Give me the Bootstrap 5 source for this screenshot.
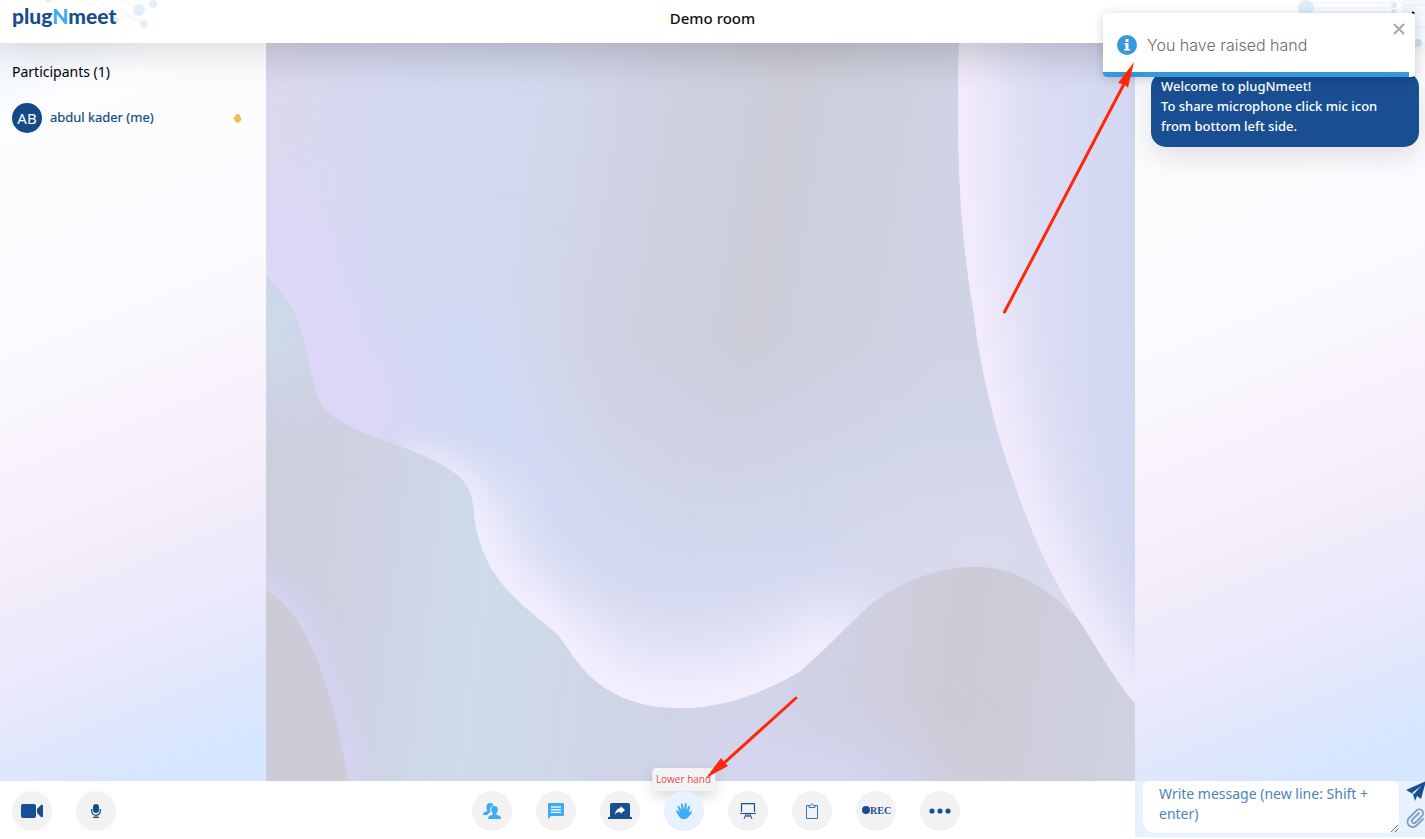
<!DOCTYPE html>
<html lang="en">
<head>
<meta charset="utf-8">
<meta name="viewport" content="width=device-width, initial-scale=1">
<title>plugNmeet - Demo room</title>
<link href="https://cdn.jsdelivr.net/npm/bootstrap@5.3.0/dist/css/bootstrap.min.css" rel="stylesheet">
<style>
  :root { --navy: #194f92; --sky: #3dabf6; }
  body { font-family: "Noto Sans", sans-serif; font-size: 14px; line-height: 20px; color: #111; background: #fff; }
  .app-header { height: 43px; background: #fff; box-shadow: 0 4px 40px rgba(0, 0, 0, .16); z-index: 2; }
  .brand { font-family: Lato, sans-serif; font-weight: 900; font-size: 21px; line-height: 32px; color: var(--navy); }
  .brand:hover { color: var(--navy); }
  .brand span { color: var(--sky); }
  .circuit { top: 0; pointer-events: none; }
  .room-title { font-weight: 500; font-size: 15px; line-height: 36px; }
  .menu-toggle { right: 6px; top: 8px; width: 12px; height: 16px; }
  .side-panel { background: linear-gradient(158deg, #eef5fb 0%, #fcfdff 9%, #fdfbff 32%, #f5eefa 62%, #e9e8fb 78%, #d5e6ff 95%); }
  .people { width: 266px; padding: 19px 24px 0 12px; }
  .chat { width: 290px; padding: 29px 6px 0 16px; }
  .people h1 { font-size: 14px; line-height: 20px; font-weight: 400; margin-bottom: 21px; color: #000; }
  .avatar { width: 30px; height: 30px; background: #164a86; color: #fff; font-size: 15px; }
  .person { color: #164a86; font-size: 13px; line-height: 18px; padding-bottom: 2px; -webkit-text-stroke: .2px; }
  .bubble { background: var(--navy); color: #fff; border-radius: 15px; padding: 4px 10px 11px; font-weight: 500; font-size: 13px; box-shadow: 0 10px 30px rgba(0, 0, 0, .12); }
  .stage svg { width: 100%; height: 100%; }
  .app-footer { height: 58px; padding: 0 0 2px 6px; background: #fff; z-index: 3; }
  .tool { width: 40px; height: 40px; background: #f2f2f2; color: var(--navy); }
  .tool.lit { color: var(--sky); }
  .tool.raised { background: #e8f1ff; }
  .tools { gap: 24px; }
  .tools-start { padding-left: 6px; }
  .tip { bottom: 40px; left: 50%; transform: translateX(-50%); background: #f4f4f6; color: #e8474c; font-family: "Open Sans", sans-serif; font-size: 10px; line-height: 15px; padding: 4px 4px; border-radius: 4px; box-shadow: 0 6px 14px rgba(0, 0, 0, .14); z-index: -1; }
  .tool-wrap { z-index: 1; }
  .composer { width: 290px; background: #e8f1ff; padding-left: 8px; overflow: hidden; }
  .composer textarea { width: 256px; height: 52px; border: 0; border-radius: 6px 6px 12px 12px; padding: 3px 16px; font-size: 14px; line-height: 20px; color: var(--navy); background: #fff; overflow: hidden; }
  .composer textarea::placeholder { color: #4d83b9; opacity: 1; }
  .composer-actions { width: 26px; padding: 0 0 0 7px; }
  .notice { top: 13px; right: 10px; width: 312px; height: 64px; background: #fff; border-radius: 4px; box-shadow: 0 1px 10px rgba(0, 0, 0, .12), 0 2px 15px rgba(0, 0, 0, .06); font-family: Inter, "Liberation Sans", sans-serif; font-weight: 300; font-size: 16px; color: #6c6c6c; padding: 0 14px; z-index: 5; overflow: hidden; }
  .notice-text { margin-left: 10px; }
  .notice-bar { left: 0; bottom: 0; width: 98%; height: 5px; background: #3498db; }
  .notice-close { top: 10px; right: 10px; color: #a8a8a8; }
  .pointers { inset: 0; width: 100%; height: 100%; z-index: 6; pointer-events: none; }
</style>
</head>
<body>
<div class="position-relative d-flex flex-column vh-100 overflow-hidden">
  <header class="app-header position-relative flex-shrink-0 d-flex justify-content-center">
    <svg class="circuit position-absolute start-0" width="180" height="43" fill="#e3f0fc" stroke="#edf6fd" aria-hidden="true">
      <g fill="none"><path d="M82 0l36 16h18M96 0l40 20M108 0l34 23M122 0l16 8"/></g>
      <g stroke="none"><circle cx="139" cy="10" r="6"/><circle cx="153" cy="4" r="4"/><circle cx="144" cy="24" r="4"/><circle cx="116" cy="20" r="3"/><circle cx="48" cy="0" r="3"/></g>
    </svg>
    <svg class="circuit position-absolute end-0" width="145" height="80" fill="#dcecfb" stroke="#e4f0fb" aria-hidden="true">
      <path stroke="none" fill="#f2f8fe" d="M122 0h23v43h-23z"/>
      <path fill="none" d="M26 3h86M26 8h86M34 12h78M118 0l6 5h21M134 27h11"/>
      <g stroke="none"><circle cx="26" cy="8" r="8"/><circle cx="114" cy="5" r="3"/><circle cx="114" cy="12" r="3"/><circle cx="138" cy="43" r="4" fill="#cfdcf0"/></g>
    </svg>
    <a href="#" class="brand position-absolute start-0 top-0 ms-2 ps-1 text-decoration-none">plug<span>N</span>meet</a>
    <div class="room-title">Demo room</div>
    <button class="menu-toggle btn p-0 border-0 position-absolute d-flex" aria-label="Menu"><svg width="12" height="16"><circle cx="6" cy="5" r="1.500"/></svg></button>
  </header>

  <main class="d-flex flex-grow-1" style="min-height:0">
    <aside class="people side-panel flex-shrink-0">
      <h1>Participants (1)</h1>
      <div class="d-flex align-items-center">
        <div class="avatar rounded-circle d-flex align-items-center justify-content-center me-2">AB</div>
        <div class="person flex-grow-1">abdul kader (me)</div>
        <svg width="9" height="10" viewBox="0 0 14 18" fill="#f9bd4f" role="img" aria-label="Hand raised"><path d="M4 16C2 14 0 11 0 8l2-1 1 1V4l2-2 1 1 1-2 2 1 1 1 2 1v4l2 1c0 3-1 6-3 7-2 2-5 2-7 0z"/></svg>
      </div>
    </aside>

    <section class="stage flex-grow-1 overflow-hidden" aria-label="Stage">
      <svg class="d-block" viewBox="0 0 869 738" preserveAspectRatio="none" aria-hidden="true">
        <defs>
          <path id="wave" d="M0 0V232C18 253 26 258 34 284C44 314 46 355 61 368C89 396 158 403 194 434C213 455 204 470 213 496C226 543 259 563 291 591C309 611 327 665 416 665C460 665 500 648 533 629C565 602 585 578 608 559C650 529 704 514 749 531C783 546 801 565 813 577L869 577V0Z"/>
          <path id="blob" d="M693 0C690 110 694 190 707 265C715 335 732 400 760 472C776 516 799 556 813 577C828 601 848 635 869 661V0Z"/>
          <path id="corner" d="M0 547C45 573 68 655 82 738H0Z"/>
          <clipPath id="waveClip"><use href="#wave"/></clipPath>
          <clipPath id="blobClip"><use href="#blob"/></clipPath>
          <linearGradient id="base" x1="0" y1=".5" x2="1" y2=".6"><stop offset="0" stop-color="#cdcedd"/><stop offset=".1" stop-color="#cfd0e0"/><stop offset=".27" stop-color="#cddbea"/><stop offset=".45" stop-color="#cfd4e7"/><stop offset=".6" stop-color="#d2d4ea"/><stop offset=".82" stop-color="#cccbd6"/><stop offset="1" stop-color="#cfd0e0"/></linearGradient>
          <linearGradient id="sheet" x1="0" y1="0" x2="1" y2=".12"><stop offset="0" stop-color="#dcd8ee"/><stop offset=".14" stop-color="#d5d9f2"/><stop offset=".32" stop-color="#d2d8ed"/><stop offset=".46" stop-color="#cfd1e1"/><stop offset=".6" stop-color="#cccdd9"/><stop offset=".82" stop-color="#d0d3e4"/></linearGradient>
          <linearGradient id="right" x1="0" x2="1"><stop offset="0" stop-color="#e6e4f6"/><stop offset=".5" stop-color="#d9dcf4"/><stop offset="1" stop-color="#d2d8f0"/></linearGradient>
          <linearGradient id="lower" x1="0" y1="0" x2="0" y2="1"><stop offset=".45" stop-color="#d2d8f2" stop-opacity="0"/><stop offset=".8" stop-color="#d4d9f0"/><stop offset="1" stop-color="#e6e6f8"/></linearGradient>
          <linearGradient id="shade" x1="0" y1="0" x2="0" y2="1"><stop offset="0" stop-color="#777" stop-opacity=".1"/><stop offset="1" stop-color="#777" stop-opacity="0"/></linearGradient>
          <filter id="near" x="-30%" y="-30%" width="160%" height="160%"><feGaussianBlur stdDeviation="12"/></filter>
          <filter id="soft" x="-50%" y="-50%" width="200%" height="200%"><feGaussianBlur stdDeviation="30"/></filter>
          <filter id="softer" x="-80%" y="-80%" width="260%" height="260%"><feGaussianBlur stdDeviation="38"/></filter>
        </defs>
        <rect width="869" height="738" fill="url(#base)"/>
        <g filter="url(#softer)"><ellipse cx="0" cy="265" rx="50" ry="50" fill="#c9dff2"/><ellipse cx="10" cy="330" rx="60" ry="30" fill="#cfd8ea"/><ellipse cx="570" cy="748" rx="110" ry="34" fill="#d6d7fa"/></g>
        <use href="#corner" fill="none" stroke="#d6d4f8" stroke-width="22" filter="url(#near)"/>
        <use href="#corner" fill="#cccbd6"/>
        <g clip-path="url(#waveClip)">
          <use href="#wave" fill="url(#sheet)"/>
          <use href="#wave" fill="url(#lower)"/>
          <g filter="url(#softer)"><path d="M0 150C20 270 60 340 120 400" fill="none" stroke="#e2d6fb" stroke-width="65"/><path d="M180 240C230 380 250 450 320 520" fill="none" stroke="#d0dbf5" stroke-width="80"/><ellipse cx="720" cy="505" rx="110" ry="36" fill="#dcdbe8"/></g>
          <g fill="none" stroke="#f5f0fe">
            <path d="M200 450C213 470 204 470 213 496C226 543 259 563 291 591C309 611 327 665 416 665C460 665 500 648 533 629L590 575" stroke-width="60" filter="url(#soft)"/>
            <path d="M140 410C165 416 180 422 194 434C213 455 204 470 213 496C226 543 259 563 291 591C309 611 327 665 416 665C460 665 500 648 533 629L570 595" stroke-width="20" stroke-opacity=".85" filter="url(#near)"/>
          </g>
        </g>
        <g clip-path="url(#blobClip)">
          <use href="#blob" fill="url(#right)"/>
          <g fill="none" stroke="#f3ecfc">
            <path d="M693 -60V0C690 110 694 190 707 265C715 335 732 400 760 472C776 516 799 556 813 577C828 601 848 635 890 691" stroke-width="56" filter="url(#soft)"/>
            <path d="M693 -60V0C690 110 694 190 707 265C715 335 732 400 760 472C776 516 799 556 813 577C828 601 848 635 890 691" stroke-width="22" filter="url(#near)"/>
          </g>
        </g>
        <rect width="869" height="50" fill="url(#shade)"/>
      </svg>
    </section>

    <aside class="chat side-panel flex-shrink-0">
      <div class="bubble">Welcome to plugNmeet!<br>To share microphone click mic icon from bottom left side.</div>
    </aside>
  </main>

  <footer class="app-footer position-relative flex-shrink-0 d-flex">
    <div class="tools tools-start d-flex align-items-center flex-fill w-25 pt-1">
      <button class="tool btn p-0 border-0 rounded-circle d-flex align-items-center justify-content-center" aria-label="Camera"><svg width="22" height="16" fill="currentColor"><rect y="1" width="15" height="14" rx="2"/><path d="M16 6l4-4q2-1 2 1v10q0 2-2 1l-4-4z"/></svg></button>
      <button class="tool btn p-0 border-0 rounded-circle d-flex align-items-center justify-content-center" aria-label="Microphone"><svg width="10" height="14" fill="currentColor"><rect x="2" width="6" height="9" rx="3"/><path fill="none" stroke="currentColor" stroke-width="1.3" d="M.7 5v2a4.3 4.3 0 0 0 8.6 0V5M5 11v2M2 13.3h6"/></svg></button>
    </div>
    <div class="tools d-flex align-items-center flex-shrink-0 pt-1">
      <button class="tool lit btn p-0 border-0 rounded-circle d-flex align-items-center justify-content-center" aria-label="Participants"><svg width="18" height="16" fill="currentColor"><path d="M7 0c2.500 0 3.500 1 3.500 2.500C7.500 3 6.500 6 7.500 9L4 12H0c0-2 1-3 3.500-3.500C4.500 8 4 7 3.700 6 3 3 4 0 7 0z"/><path d="M11.500 3c2.500 0 3.500 2 3.200 4-.2 1.500-.7 2.500-1.400 3.200v1.600c3 .4 4.700 1.500 4.700 4.200H5c0-2.700 1.700-3.800 4.700-4.200v-1.600C9 9.500 8.500 8.500 8.300 7 8 5 9 3 11.500 3z"/></svg></button>
      <button class="tool lit btn p-0 border-0 rounded-circle d-flex align-items-center justify-content-center" aria-label="Chat"><svg width="16" height="16" fill="currentColor"><path d="M1 0h14q1 0 1 1v11q0 1-1 1H3l-3 3V1q0-1 1-1z"/><path stroke="#e9f5fe" stroke-width="1.4" d="M3 4h10M3 6.700h10M3 9.400h10"/></svg></button>
      <button class="tool btn p-0 border-0 rounded-circle d-flex align-items-center justify-content-center" aria-label="Share screen"><svg width="24" height="16" fill="currentColor"><path d="M4 0h16q2 0 2 2v12h2v2H0v-2h2V2q0-2 2-2z"/><path fill="#fff" d="M12.500 3l4.500 4-4.500 4V9C10 8.800 8.500 9.500 7 11.500 7.500 8 9 5.500 12.500 5z"/></svg></button>
      <div class="tool-wrap position-relative">
        <button class="tool lit raised btn p-0 border-0 rounded-circle d-flex align-items-center justify-content-center" aria-label="Lower hand" aria-describedby="handTip"><svg width="16" height="16" viewBox="0 0 16 16" fill="currentColor"><path d="M5 15.500C3 13.500 1.500 11 .2 8.500c-.6-1 .8-1.800 1.600-1L4 9.500 1.600 4.200c-.4-1.100 1.200-1.800 1.800-.7L5.600 7.300 4.800 1.500c-.1-1.300 1.700-1.500 2-.2L8 7 8.700 1c.2-1.300 2.100-1.200 2.100.1L10.500 7.300l1.700-3.900c.5-1.100 2.100-.5 1.800.7l-1.300 5.300 1.600-1c1.100-.6 2.200.6 1.400 1.500L12.500 14c-1.700 1.900-5 3-7.500 1.500z"/></svg></button>
        <div id="handTip" class="tip position-absolute text-nowrap" role="tooltip">Lower hand</div>
      </div>
      <button class="tool btn p-0 border-0 rounded-circle d-flex align-items-center justify-content-center" aria-label="Whiteboard"><svg width="16" height="16" fill="none" stroke="currentColor"><path stroke-width="1.200" d="M1.500 9V.6h13V9M0 10.500h16"/><path d="M6 11l-2 5M10 11l2 5M8 11v3M5 13h6"/></svg></button>
      <button class="tool btn p-0 border-0 rounded-circle d-flex align-items-center justify-content-center" aria-label="Clipboard"><svg width="12" height="16" fill="none" stroke="#3a77b4"><path d="M3 2.500H.5v13h11v-13H9M3 4.500v-2h1.500Q6-.8 7.500 2.500H9v2z"/></svg></button>
      <button class="tool btn p-0 border-0 rounded-circle d-flex align-items-center justify-content-center" aria-label="Record"><svg width="30" height="12" fill="currentColor"><circle cx="5" cy="5" r="4"/><text x="9" y="9" font-family="Liberation Serif, serif" font-weight="700" font-size="10">REC</text></svg></button>
      <button class="tool btn p-0 border-0 rounded-circle d-flex align-items-center justify-content-center" aria-label="More"><svg width="22" height="6" fill="currentColor"><circle cx="3" cy="3" r="2.600"/><circle cx="11" cy="3" r="2.600"/><circle cx="19" cy="3" r="2.600"/></svg></button>
    </div>
    <div class="flex-fill w-25 d-flex justify-content-end">
      <form class="composer d-flex flex-shrink-0">
        <textarea aria-label="Message" placeholder="Write message (new line: Shift + enter)"></textarea>
        <div class="composer-actions d-flex flex-column gap-1">
          <button type="button" class="btn p-0 border-0 d-flex" aria-label="Send"><svg width="20" height="22" fill="#194f92"><path d="M0 9L20 0l-5 18-4-3-2 5-2-7zM8 13l7-8-9 7z" fill-rule="evenodd"/></svg></button>
          <button type="button" class="btn p-0 border-0 d-flex" aria-label="Attach file"><svg width="20" height="22" fill="none" stroke="#7aa0cd" stroke-width="1.800" stroke-linecap="round"><path d="M13 6l-6.500 6.500a2 2 0 0 0 3 3L16 9a3.800 3.800 0 0 0-5.500-5.500L3 11a5.300 5.300 0 0 0 7.500 7.500L17 12"/></svg></button>
        </div>
      </form>
    </div>
  </footer>

  <div class="notice position-absolute d-flex align-items-center" role="alert">
    <svg class="flex-shrink-0" width="20" height="20" aria-hidden="true"><circle cx="10" cy="10" r="10" fill="#3498db"/><path fill="#fff" d="M8.500 4h3v3h-3zM7.500 8h4v6h1.500v1.500H7V14h1.500V9.500h-1z"/></svg>
    <span class="notice-text">You have raised hand</span>
    <button class="notice-close btn p-0 border-0 position-absolute d-flex" aria-label="Close"><svg width="12" height="12" stroke="currentColor" stroke-width="2"><path d="M1 1l10 10M11 1L1 11"/></svg></button>
    <div class="notice-bar position-absolute"></div>
  </div>

  <svg class="pointers position-absolute" viewBox="0 0 1425 839" preserveAspectRatio="none" fill="#ff260a" stroke="#ff260a" aria-hidden="true">
    <path stroke-width="3" stroke-linecap="round" d="M1004.500 312L1124 84M796 698L724 763"/>
    <path stroke="none" d="M1134 62l-6 25.500-4-3-6-1.500zM706 778l15-20 3 4 4 4z"/>
  </svg>
</div>
<script src="https://cdn.jsdelivr.net/npm/bootstrap@5.3.0/dist/js/bootstrap.bundle.min.js"></script>
</body>
</html>
